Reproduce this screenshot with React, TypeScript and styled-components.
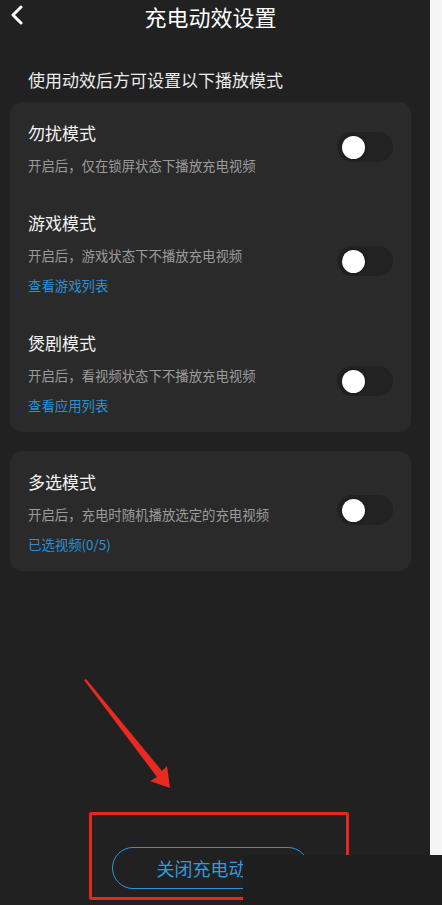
import React from "react";
import styled, { createGlobalStyle } from "styled-components";

type Mode = {
  title: string;
  desc: string;
  link?: string;
  shift: number;
};

const groups: Mode[][] = [
  [
    { title: "勿扰模式", desc: "开启后，仅在锁屏状态下播放充电视频", shift: -2 },
    {
      title: "游戏模式",
      desc: "开启后，游戏状态下不播放充电视频",
      link: "查看游戏列表",
      shift: 7,
    },
    {
      title: "煲剧模式",
      desc: "开启后，看视频状态下不播放充电视频",
      link: "查看应用列表",
      shift: 7,
    },
  ],
  [
    {
      title: "多选模式",
      desc: "开启后，充电时随机播放选定的充电视频",
      link: "已选视频(0/5)",
      shift: -3,
    },
  ],
];

const GlobalStyle = createGlobalStyle`
  html, body {
    margin: 0;
    padding: 0;
    background: #f5f5f5;
  }
  body {
    font-family: "Noto Sans CJK SC", "Noto Sans", sans-serif;
  }
`;

const App: React.FC = () => {
  return (
    <Page>
      <GlobalStyle />
      <Screen>
        <Header>
          <BackButton aria-label="返回">
            <svg width="14" height="20" viewBox="0 0 14 20">
              <path
                d="M11 2 L3 10 L11 18"
                fill="none"
                stroke="#fff"
                strokeWidth="3"
                strokeLinecap="round"
                strokeLinejoin="round"
              />
            </svg>
          </BackButton>
          <Title>充电动效设置</Title>
        </Header>
        <Subtitle>使用动效后方可设置以下播放模式</Subtitle>
        {groups.map((group, gi) => (
          <Card key={gi}>
            {group.map((mode) => (
              <Item key={mode.title}>
                <ItemText>
                  <ItemTitle>{mode.title}</ItemTitle>
                  <ItemDesc>{mode.desc}</ItemDesc>
                  {mode.link && <ItemLink>{mode.link}</ItemLink>}
                </ItemText>
                <Toggle $shift={mode.shift}>
                  <Knob />
                </Toggle>
              </Item>
            ))}
          </Card>
        ))}
        <Spacer />
        <CloseButton>关闭充电动效</CloseButton>
      </Screen>

      {/* annotations drawn over the screenshot */}
      <Annotation width="442" height="905" viewBox="0 0 442 905">
        <polygon
          points="84,680 86,679 162,771 167,766 170,788 150,781 157,777"
          fill="#ea2a21"
        />
      </Annotation>
      <RedBox />
      <Cover />
    </Page>
  );
};

const Page = styled.div`
  position: relative;
  width: 442px;
  height: 905px;
  overflow: hidden;
  background: #f5f5f5;
`;

const Screen = styled.div`
  width: 430px;
  height: 905px;
  box-sizing: border-box;
  padding: 0 19px 16px 10px;
  background: #212121;
  display: flex;
  flex-direction: column;
`;

const Header = styled.div`
  position: relative;
  height: 32px;
  display: flex;
  align-items: center;
  justify-content: center;
`;

const BackButton = styled.div`
  position: absolute;
  left: 0;
  top: 5px;
  width: 14px;
  height: 20px;
  display: flex;
`;

const Title = styled.div`
  font-size: 22px;
  line-height: 32px;
  color: #ffffff;
`;

const Subtitle = styled.div`
  margin: 36px 0 10px 18px;
  font-size: 17px;
  line-height: 24px;
  color: #ececec;
`;

const Card = styled.div`
  background: #2a2a2a;
  border-radius: 12px;
  padding: 0 18px;
  & + & {
    margin-top: 19px;
  }
`;

const Item = styled.div`
  display: flex;
  align-items: center;
  padding: 19px 0 15px;
`;

const ItemText = styled.div`
  flex: 1;
  display: flex;
  flex-direction: column;
`;

const ItemTitle = styled.div`
  font-size: 17px;
  line-height: 24px;
  color: #f2f2f2;
`;

const ItemDesc = styled.div`
  margin-top: 8px;
  font-size: 13.4px;
  line-height: 24px;
  color: #9b9b9b;
`;

const ItemLink = styled.div`
  margin-top: 6px;
  font-size: 13.4px;
  line-height: 24px;
  color: #2a90d4;
`;

const Toggle = styled.div<{ $shift: number }>`
  flex: none;
  transform: translateY(${(p) => p.$shift}px);
  width: 56px;
  height: 30px;
  border-radius: 15px;
  background: #222222;
  display: flex;
  align-items: center;
  padding-left: 5px;
  box-sizing: border-box;
`;

const Knob = styled.div`
  width: 23px;
  height: 23px;
  border-radius: 50%;
  background: #ffffff;
  box-shadow: 0 0 3px rgba(0, 0, 0, 0.6);
`;

const Spacer = styled.div`
  flex: 1;
`;

const CloseButton = styled.div`
  align-self: center;
  width: 197px;
  height: 42px;
  box-sizing: border-box;
  border: 1.5px solid #2a96d8;
  border-radius: 21px;
  display: flex;
  align-items: center;
  justify-content: center;
  font-size: 18px;
  color: #2e9be0;
`;

const Annotation = styled.svg`
  position: absolute;
  left: 0;
  top: 0;
  pointer-events: none;
`;

const RedBox = styled.div`
  position: absolute;
  left: 89px;
  top: 812px;
  width: 260px;
  height: 88px;
  box-sizing: border-box;
  border: 3px solid #e5261f;
  border-radius: 2px;
`;

const Cover = styled.div`
  position: absolute;
  left: 243px;
  top: 855px;
  right: 0;
  bottom: 0;
  background: #1e1e1e;
`;

export default App;
